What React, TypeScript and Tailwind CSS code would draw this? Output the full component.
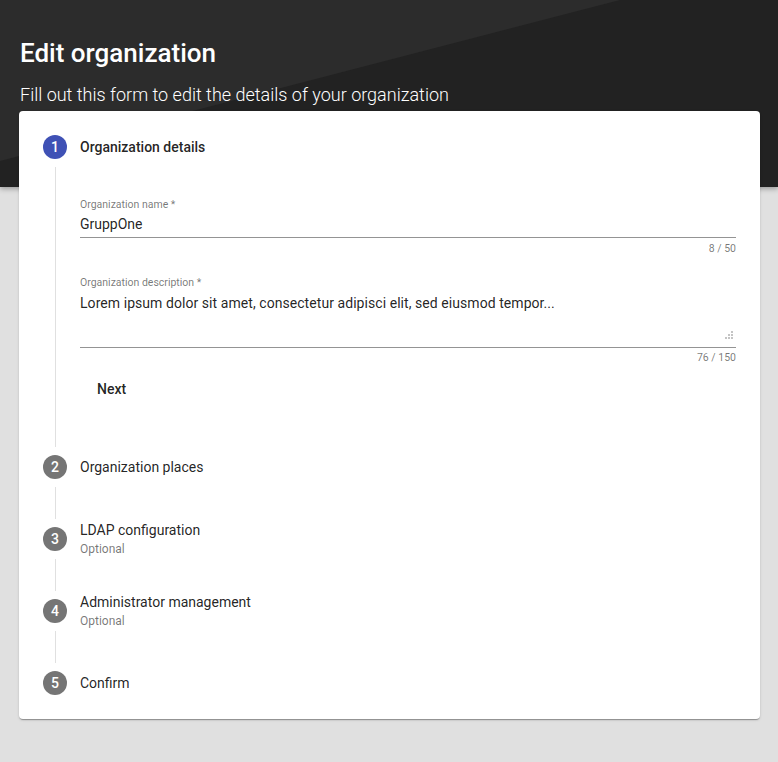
import React from "react";

const Line = () => (
  <div className="absolute left-0 top-[-16px] bottom-[-16px] w-px bg-[rgba(0,0,0,0.12)]" />
);

function StepHeader({
  n,
  label,
  active,
  optional,
}: {
  n: number;
  label: string;
  active?: boolean;
  optional?: boolean;
}) {
  return (
    <div className="flex h-[72px] items-center px-6">
      <div
        className={
          "mr-[13px] flex h-6 w-6 shrink-0 items-center justify-center rounded-full text-[14px] font-medium text-white " +
          (active ? "bg-[#3f51b5]" : "bg-[#757575]")
        }
      >
        {n}
      </div>
      <div className="flex flex-col">
        <div
          className={
            "text-[14px] leading-[17px] text-[rgba(0,0,0,0.87)] " +
            (active ? "font-medium" : "font-normal")
          }
        >
          {label}
        </div>
        {optional && (
          <div className="mt-[3px] text-[12px] leading-[14px] text-[rgba(0,0,0,0.54)]">
            Optional
          </div>
        )}
      </div>
    </div>
  );
}

function Connector() {
  return (
    <div className="relative ml-[36px] h-0">
      <Line />
    </div>
  );
}

export default function App() {
  return (
    <div className="min-h-screen bg-[#e0e0e0] font-['Roboto',sans-serif]">
      <div className="relative h-[187px] overflow-hidden bg-[#222222] px-5 pt-[37px] shadow-[0_2px_5px_rgba(0,0,0,0.3)]">
        <svg
          className="absolute left-0 top-0"
          width="778"
          height="187"
          viewBox="0 0 778 187"
        >
          <polygon points="0,0 620,0 0,161" fill="#2c2c2c" />
        </svg>
        <div className="relative">
          <h1 className="text-[26px] font-medium leading-[32px] text-white">
            Edit organization
          </h1>
          <p className="mt-[14px] text-[18px] font-light leading-[24px] text-white">
            Fill out this form to edit the details of your organization
          </p>
        </div>
      </div>

      <div className="relative z-10 mx-[19px] mt-[-76px] w-[741px] rounded-[4px] bg-white shadow-[0_2px_1px_-1px_rgba(0,0,0,0.2),0_1px_1px_0_rgba(0,0,0,0.14),0_1px_3px_0_rgba(0,0,0,0.12)]">
        <StepHeader n={1} label="Organization details" active />
        <div className="relative ml-[36px] pb-6 pl-[25px] pr-6">
          <Line />
          <div className="pt-[16px]">
            <div className="text-[10.5px] leading-[12px] text-[rgba(0,0,0,0.54)]">
              Organization name *
            </div>
            <div className="mt-[5px] text-[14px] leading-[17px] text-[rgba(0,0,0,0.87)]">
              GruppOne
            </div>
            <div className="mt-[4px] h-px bg-[rgba(0,0,0,0.42)]" />
            <div className="mt-[5px] text-right text-[10.5px] leading-[12px] text-[rgba(0,0,0,0.54)]">
              8 / 50
            </div>
          </div>

          <div className="mt-[22px]">
            <div className="text-[10.5px] leading-[12px] text-[rgba(0,0,0,0.54)]">
              Organization description *
            </div>
            <div className="relative mt-[6px] h-[48px]">
              <div className="text-[14px] leading-[17px] tracking-[0.06px] text-[rgba(0,0,0,0.87)]">
                Lorem ipsum dolor sit amet, consectetur adipisci elit, sed
                eiusmod tempor...
              </div>
              <svg
                className="absolute bottom-[2px] right-[2px]"
                width="10"
                height="10"
                viewBox="0 0 10 10"
              >
                <rect x="7" y="0" width="2" height="2" fill="#c4c4c4" />
                <rect x="4" y="3" width="2" height="2" fill="#c4c4c4" />
                <rect x="7" y="3" width="2" height="2" fill="#c4c4c4" />
                <rect x="1" y="6" width="2" height="2" fill="#c4c4c4" />
                <rect x="4" y="6" width="2" height="2" fill="#c4c4c4" />
                <rect x="7" y="6" width="2" height="2" fill="#c4c4c4" />
              </svg>
            </div>
            <div className="mt-[4px] h-px bg-[rgba(0,0,0,0.42)]" />
            <div className="mt-[4px] text-right text-[10.5px] leading-[12px] text-[rgba(0,0,0,0.54)]">
              76 / 150
            </div>
          </div>

          <button className="ml-px mt-[7px] h-9 rounded-[4px] px-4 text-[14px] font-medium text-[rgba(0,0,0,0.87)]">
            Next
          </button>
        </div>

        <StepHeader n={2} label="Organization places" />
        <Connector />
        <StepHeader n={3} label="LDAP configuration" optional />
        <Connector />
        <StepHeader n={4} label="Administrator management" optional />
        <Connector />
        <StepHeader n={5} label="Confirm" />
      </div>
    </div>
  );
}
